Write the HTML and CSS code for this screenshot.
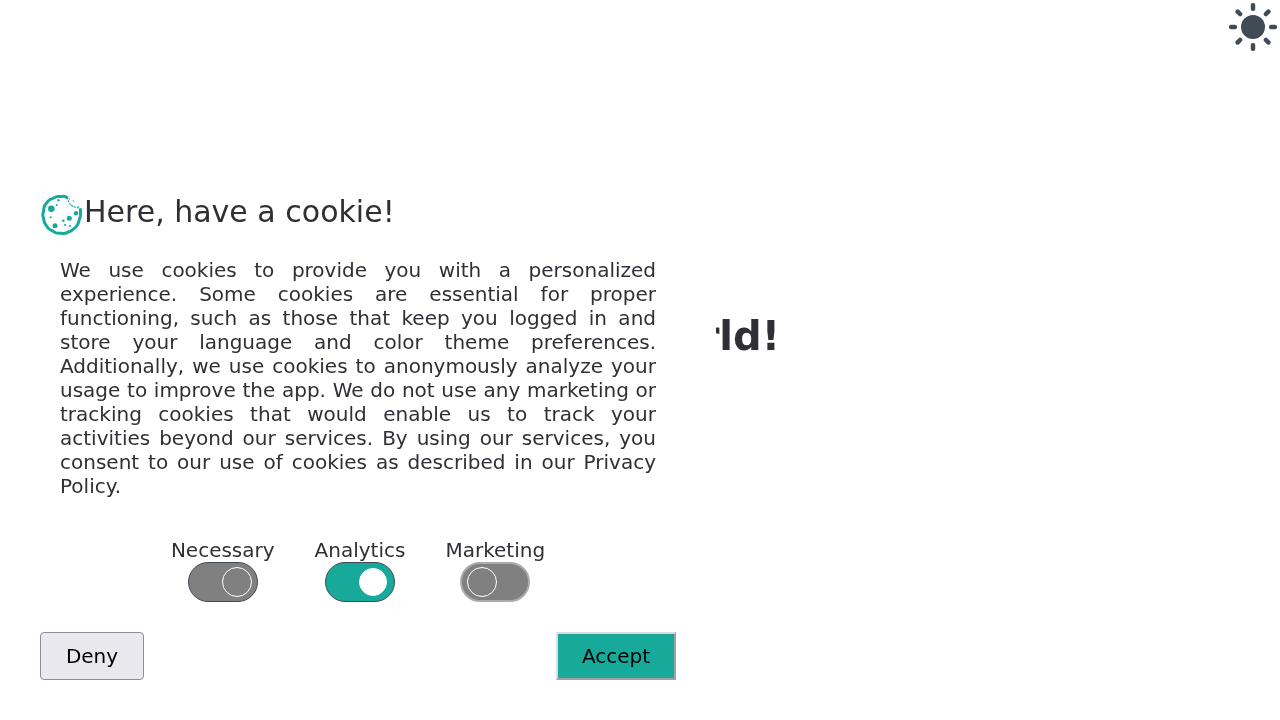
FILE: index.html
```html
<!DOCTYPE html>
<html lang="en">
<head>
    <meta charset="UTF-8">
    <meta name="viewport" content="width=device-width, initial-scale=1.0">
    <title>Hello World</title>
    <link rel="stylesheet" href="styles.css">
</head>
<body>

    <button class="theme-toggle" aria-label="Toggle theme">
        <svg width="48" height="48" viewBox="0 0 48 48" fill="#414b56">
            <circle cx="24" cy="24" r="12"/>
            <rect x="21.750" y="0" width="4.500" height="8" rx="2"/>
            <rect x="21.750" y="0" width="4.500" height="8" rx="2" transform="rotate(45 24 24)"/>
            <rect x="21.750" y="0" width="4.500" height="8" rx="2" transform="rotate(90 24 24)"/>
            <rect x="21.750" y="0" width="4.500" height="8" rx="2" transform="rotate(135 24 24)"/>
            <rect x="21.750" y="0" width="4.500" height="8" rx="2" transform="rotate(180 24 24)"/>
            <rect x="21.750" y="0" width="4.500" height="8" rx="2" transform="rotate(225 24 24)"/>
            <rect x="21.750" y="0" width="4.500" height="8" rx="2" transform="rotate(270 24 24)"/>
            <rect x="21.750" y="0" width="4.500" height="8" rx="2" transform="rotate(315 24 24)"/>
        </svg>
    </button>

    <main class="hero">
        <h1>Hello World!</h1>
    </main>

    <section class="cookie-modal">
        <header class="cookie-header">
            <svg class="cookie-icon" width="44" height="44" viewBox="0 0 44 44">
                <path d="M27 3.500C24 1 21 3 18 2.500C15 2.500 13 5 10 5.500C7.500 7 7 9 5 11C3 13.500 4.500 16 3 19C2 22 4 24.500 4 27C4.500 30 7 32 8 34C10.500 36.500 12.500 36.500 15 38.500C18 40 20 39 23 39.500C26 40 28 37.500 31 37C33.500 35.500 35 34.500 37 31.500C39 29 38.500 27 40 24C41 21 40.500 18 40.500 15.500" fill="none" stroke="#17a999" stroke-width="3" stroke-linecap="round"/>
                <path d="M27 3.500C27.500 6 29 9 31 11C33.500 13.500 36.500 12.500 40.500 15.500" fill="none" stroke="#17a999" stroke-width="1.200" stroke-dasharray="2 1"/>
                <g fill="#17a999">
                    <circle cx="11.300" cy="14.700" r="3.300"/>
                    <circle cx="15" cy="31.700" r="2.500"/>
                    <circle cx="29.300" cy="24.300" r="2.500"/>
                    <circle cx="36" cy="19.300" r="2.200"/>
                    <circle cx="23.300" cy="26.700" r="1.300"/>
                    <circle cx="18.300" cy="6.300" r="1.200"/>
                    <circle cx="16.700" cy="11" r="1"/>
                    <circle cx="10.700" cy="23.300" r="1"/>
                    <circle cx="25" cy="31" r="1"/>
                    <circle cx="30" cy="32" r="1"/>
                    <circle cx="29.300" cy="5" r="0.700"/>
                    <circle cx="33.300" cy="7" r="0.700"/>
                    <circle cx="38.300" cy="12.700" r="0.700"/>
                </g>
            </svg>
            <h2>Here, have a cookie!</h2>
        </header>

        <p class="cookie-text">We use cookies to provide you with a personalized experience. Some cookies are essential for proper functioning, such as those that keep you logged in and store your language and color theme preferences. Additionally, we use cookies to anonymously analyze your usage to improve the app. We do not use any marketing or tracking cookies that would enable us to track your activities beyond our services. By using our services, you consent to our use of cookies as described in our Privacy Policy.</p>

        <div class="cookie-options">
            <div class="option">
                <span>Necessary</span>
                <span class="switch switch-necessary"><span class="knob"></span></span>
            </div>
            <div class="option">
                <span>Analytics</span>
                <span class="switch switch-on"><span class="knob"></span></span>
            </div>
            <div class="option">
                <span>Marketing</span>
                <span class="switch switch-off"><span class="knob"></span></span>
            </div>
        </div>

        <div class="cookie-actions">
            <button class="btn-deny">Deny</button>
            <button class="btn-accept">Accept</button>
        </div>
    </section>

</body>
</html>
```

FILE: styles.css
```css
/* Base Styles */
body {
    font-family: 'DejaVu Sans', sans-serif;
    background-color: #ffffff;
    color: #2f3035;
    margin: 0;
    height: 100vh;
    overflow: hidden;
}
.hero {
    display: flex;
    justify-content: center;
    padding-top: 312px;
    will-change: transform;
}
h1 {
    margin: 0;
    font-size: 40px;
    line-height: 48px;
    font-weight: 700;
}

/* Theme toggle */
.theme-toggle {
    position: fixed;
    top: 3px;
    right: 3px;
    padding: 0;
    border: none;
    background: none;
    display: flex;
}

/* Cookie modal */
.cookie-modal {
    position: fixed;
    left: 0;
    bottom: 0;
    width: 716px;
    box-sizing: border-box;
    padding: 0 40px 40px;
    background-color: #ffffff;
    display: flex;
    flex-direction: column;
    will-change: transform;
}
.cookie-header {
    display: flex;
    align-items: center;
}
.cookie-icon {
    flex: none;
    margin: 4px 0 -4px;
}
h2 {
    margin: 0;
    font-size: 30px;
    line-height: 36px;
    font-weight: 400;
}
.cookie-text {
    margin: 24px 0 0;
    padding: 0 20px;
    font-size: 20px;
    line-height: 24px;
    text-align: justify;
}
.cookie-options {
    display: flex;
    justify-content: center;
    gap: 40px;
    margin-top: 40px;
    font-size: 20px;
    line-height: 24px;
}
.option {
    display: flex;
    flex-direction: column;
    align-items: center;
}
.switch {
    display: flex;
    align-items: center;
    box-sizing: border-box;
    width: 70px;
    height: 40px;
    padding: 0 5px;
    border-radius: 20px;
    border: 1px solid #414b56;
    background-color: #808080;
}
.knob {
    width: 30px;
    height: 30px;
    box-sizing: border-box;
    border-radius: 50%;
    border: 1px solid #ffffff;
    margin-top: -1px;
}
.switch-necessary {
    justify-content: flex-end;
}
.switch-on {
    justify-content: flex-end;
    padding-right: 7px;
    background-color: #17a999;
}
.switch-on .knob {
    width: 28px;
    height: 28px;
    margin-top: 0;
    background-color: #ffffff;
}
.switch-off {
    border: 2px solid #a9acb0;
}
.cookie-actions {
    display: flex;
    justify-content: space-between;
    margin-top: 30px;
}
.cookie-actions button {
    font-family: 'DejaVu Sans', sans-serif;
    font-size: 20px;
    color: #000000;
    height: 48px;
    cursor: pointer;
}
.btn-deny {
    width: 104px;
    background-color: #e9e8ee;
    border: 1px solid #8f8d9a;
    border-radius: 4px;
}
.btn-accept {
    width: 120px;
    background-color: #17a999;
    border: 2px solid;
    border-color: #dcdcdc #a0a0a0 #a0a0a0 #dcdcdc;
}
```
